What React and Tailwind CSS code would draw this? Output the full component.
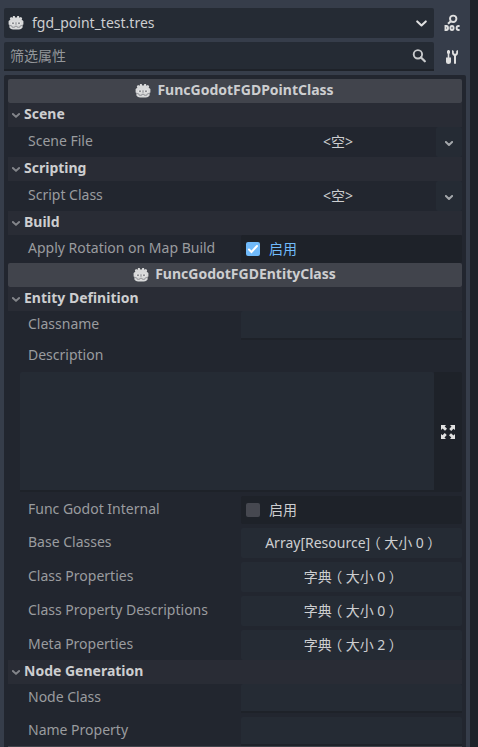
import React from "react";

function GodotIcon({ className }) {
  return (
    <svg viewBox="0 0 16 16" className={`h-4 w-4 shrink-0 ${className ?? ""}`}>
      <path
        fill="#d8d9da"
        d="M5 1h1.700l.5 1.600h1.600L9.300 1H11l.3 1.700L13 2l1.200 1.300-.5 1.400 1.700 1.300v3.500l-.8.500v2.500L13 14l-2 .4H5L3 14l-1.600-1.500V10l-.8-.5V6l1.700-1.300-.5-1.400L3 2l1.700.7z"
      />
      <g fill="#e8e8e8">
        <circle cx="4.900" cy="8.200" r="1.800" />
        <circle cx="11.100" cy="8.200" r="1.800" />
      </g>
      <g fill="#85878c">
        <circle cx="5" cy="8.300" r="1.050" />
        <circle cx="11" cy="8.300" r="1.050" />
        <rect x="7.500" y="7.300" width="1" height="2.400" />
      </g>
      <path
        fill="none"
        stroke="#85878c"
        strokeWidth=".8"
        d="M1.200 10.200l2.800.9.300 1.200h2.300l.3-1h2.200l.3 1h2.300l.3-1.200 2.800-.9"
      />
    </svg>
  );
}

function Chevron({ color, width = 2, className }) {
  return (
    <svg viewBox="0 0 8 5" className={`shrink-0 ${className}`} fill="none">
      <path
        d="M.9 1 4 3.900 7.100 1"
        stroke={color}
        strokeWidth={width}
        strokeLinecap="round"
        strokeLinejoin="round"
      />
    </svg>
  );
}

function ClassHeader({ children }) {
  return (
    <div className="flex h-6 shrink-0 items-center justify-center rounded-[2px] bg-[#41444c] pr-px font-bold text-[#cdced0]">
      <GodotIcon className="mr-1.5" />
      <span className="mb-0.5 leading-5">{children}</span>
    </div>
  );
}

function Section({ children }) {
  return (
    <div className="flex h-6 shrink-0 items-center bg-[#292c35] pl-1">
      <Chevron color="#84868b" width={1.900} className="mt-px h-[5px] w-2" />
      <span className="mb-0.5 ml-1 font-bold leading-5 text-[#cdced0]">{children}</span>
    </div>
  );
}

function Row({ label, height, labelPadding = "pb-0.5", children }) {
  return (
    <div className={`flex shrink-0 ${height}`}>
      <div
        className={`flex w-[233px] shrink-0 items-center pl-5 leading-5 text-[#9a9c9f] ${labelPadding}`}
      >
        {label}
      </div>
      {children}
    </div>
  );
}

function ResourceValue() {
  return (
    <div className="flex flex-1">
      <div className="flex flex-1 items-center justify-center pr-px text-[#cdced0]">
        &lt;空&gt;
      </div>
      <div className="flex w-[26px] items-center justify-center rounded-[2px] bg-[#252b34]">
        <Chevron color="#a4a7ab" width={2} className="mt-0.5 h-[5px] w-2" />
      </div>
    </div>
  );
}

function CheckValue({ checked }) {
  return (
    <div
      className={`flex flex-1 items-center rounded-[2px] bg-[#1e2229] pl-[5px] ${
        checked ? "text-[#70bafa]" : "text-[#cdced0]"
      }`}
    >
      <div className={`h-3.5 w-3.5 rounded-[2px] ${checked ? "bg-[#70bafa]" : "bg-[#464850]"}`}>
        {checked && (
          <svg viewBox="0 0 14 14" className="h-3.5 w-3.5" fill="none">
            <path d="m3 7.500 2.500 2.500L11 4" stroke="#fff" strokeWidth="2" strokeLinecap="round" />
          </svg>
        )}
      </div>
      <span className="ml-[9px]">启用</span>
    </div>
  );
}

function TextValue() {
  return <div className="flex-1 rounded-t-[2px] border-b-2 border-[#1e2229] bg-[#252b34]" />;
}

function ButtonValue({ label, size }) {
  return (
    <div className="flex flex-1 items-center justify-center rounded-[2px] bg-[#252b34] text-[#cdced0]">
      <span className="whitespace-nowrap">
        {label}
        <span className="mx-[3.5px] [font-feature-settings:'halt']">（</span>
        大小 {size}
        <span className="mx-[3.5px] [font-feature-settings:'halt']">）</span>
      </span>
    </div>
  );
}

function DocIcon() {
  return (
    <svg viewBox="0 0 16 18" className="h-[18px] w-4" fill="none" stroke="#e0e0e0">
      <circle cx="9.200" cy="4.800" r="3.200" strokeWidth="1.900" />
      <path d="M6.800 7.200 4 9.800" strokeWidth="2" />
      <path d="M1.500 12v4h1q1.500 0 1.500-2t-1.500-2z" strokeWidth="1.900" />
      <ellipse cx="8" cy="14" rx="1.600" ry="2" strokeWidth="1.900" />
      <path d="M15.600 12h-1q-2 0-2 2t2 2h1" strokeWidth="1.900" />
    </svg>
  );
}

function ToolsIcon() {
  return (
    <svg viewBox="0 0 14 16" className="h-4 w-3.5" fill="#e0e0e0">
      <path d="M3 1h1l1 1v2l-.7 1v3.500H6V13q0 2-2.500 2T1 13V8.500h1.700V5L2 4V2zM7 1.300v3q0 1.700 2 2.700v7q0 1 1 1t1-1V7q2-1 2-2.700v-3h-1l-.8.900V4l-.7.800h-1L8.800 4V2.200L8 1.300z" />
    </svg>
  );
}

function SearchIcon() {
  return (
    <svg viewBox="0 0 14 14" className="h-3.5 w-3.5" fill="none" stroke="#c8cacc">
      <circle cx="5.900" cy="5.300" r="4.200" strokeWidth="1.900" />
      <path d="m9 8.400 3.800 3.900" strokeWidth="2.200" strokeLinecap="round" />
    </svg>
  );
}

function ExpandIcon() {
  return (
    <svg viewBox="0 0 14 14" className="h-3.5 w-3.5" fill="#e0e0e0">
      {[0, 90, 180, 270].map((angle) => (
        <path
          key={angle}
          transform={`rotate(${angle} 7 7)`}
          d="M0 0h5L3.700 1.500 6 3.800 4 5.700 1.500 3.500 0 5z"
        />
      ))}
    </svg>
  );
}

export default function App() {
  return (
    <div
      lang="zh-CN"
      className="flex h-[747px] w-[478px] overflow-hidden bg-[#363d4a] font-['Noto_Sans','Noto_Sans_CJK_SC',sans-serif] text-sm leading-5"
    >
      <div className="flex w-[470px] flex-col pl-1 pr-1 pt-2">
        <div className="flex h-[30px] shrink-0">
          <div className="flex w-[430px] items-center rounded-[2px] bg-[#252b34] pl-1 pr-[7px] text-[#cdced0]">
            <GodotIcon />
            <span className="ml-2 flex-1">fgd_point_test.tres</span>
            <Chevron color="#e0e0e0" width={1.500} className="h-[7px] w-[11px]" />
          </div>
          <div className="flex flex-1 items-center justify-center pl-[3px]">
            <DocIcon />
          </div>
        </div>
        <div className="mt-1 flex h-[29px] shrink-0">
          <div className="flex w-[430px] items-center rounded-t-[2px] border-b-2 border-[#1e2229] bg-[#252b34] pl-1.5 pr-2 text-[#94979b]">
            <span className="flex-1">筛选属性</span>
            <SearchIcon />
          </div>
          <div className="flex flex-1 items-center justify-center pl-1">
            <ToolsIcon />
          </div>
        </div>

        <div className="mt-1 flex min-h-0 flex-1 flex-col overflow-hidden rounded-t-[2px] bg-[#22262f] px-1 pt-1">
          <ClassHeader>FuncGodotFGDPointClass</ClassHeader>
          <Section>Scene</Section>
          <Row label="Scene File" height="h-[30px]">
            <ResourceValue />
          </Row>
          <Section>Scripting</Section>
          <Row label="Script Class" height="h-[30px]">
            <ResourceValue />
          </Row>
          <Section>Build</Section>
          <Row label="Apply Rotation on Map Build" height="h-7">
            <CheckValue checked />
          </Row>
          <ClassHeader>FuncGodotFGDEntityClass</ClassHeader>
          <Section>Entity Definition</Section>
          <Row label="Classname" height="h-[29px]" labelPadding="pb-[3px]">
            <TextValue />
          </Row>
          <div className="mt-[5px] h-[27px] shrink-0 pl-5 leading-5 text-[#9a9c9f]">Description</div>
          <div className="flex h-[120px] shrink-0 pl-3">
            <div className="flex-1 rounded-t-[2px] border-b-2 border-[#1e2229] bg-[#252b34]" />
            <div className="flex w-7 items-center justify-center rounded-r-[2px] bg-[#1e2229]">
              <ExpandIcon />
            </div>
          </div>
          <div className="mt-1 flex shrink-0 flex-col gap-1">
            <Row label="Func Godot Internal" height="h-7">
              <CheckValue />
            </Row>
            <Row label="Base Classes" height="h-[30px]">
              <ButtonValue label="Array[Resource]" size={0} />
            </Row>
            <Row label="Class Properties" height="h-[30px]">
              <ButtonValue label="字典" size={0} />
            </Row>
            <Row label="Class Property Descriptions" height="h-[30px]">
              <ButtonValue label="字典" size={0} />
            </Row>
            <Row label="Meta Properties" height="h-[30px]">
              <ButtonValue label="字典" size={2} />
            </Row>
          </div>
          <Section>Node Generation</Section>
          <Row label="Node Class" height="h-[29px]" labelPadding="pb-[3px]">
            <TextValue />
          </Row>
          <div className="h-1 shrink-0" />
          <Row label="Name Property" height="h-[29px]" labelPadding="pb-[3px]">
            <TextValue />
          </Row>
          <div className="h-px shrink-0 bg-[#41444c]" />
        </div>
      </div>
      <div className="w-2 bg-[#1e232a]" />
    </div>
  );
}
